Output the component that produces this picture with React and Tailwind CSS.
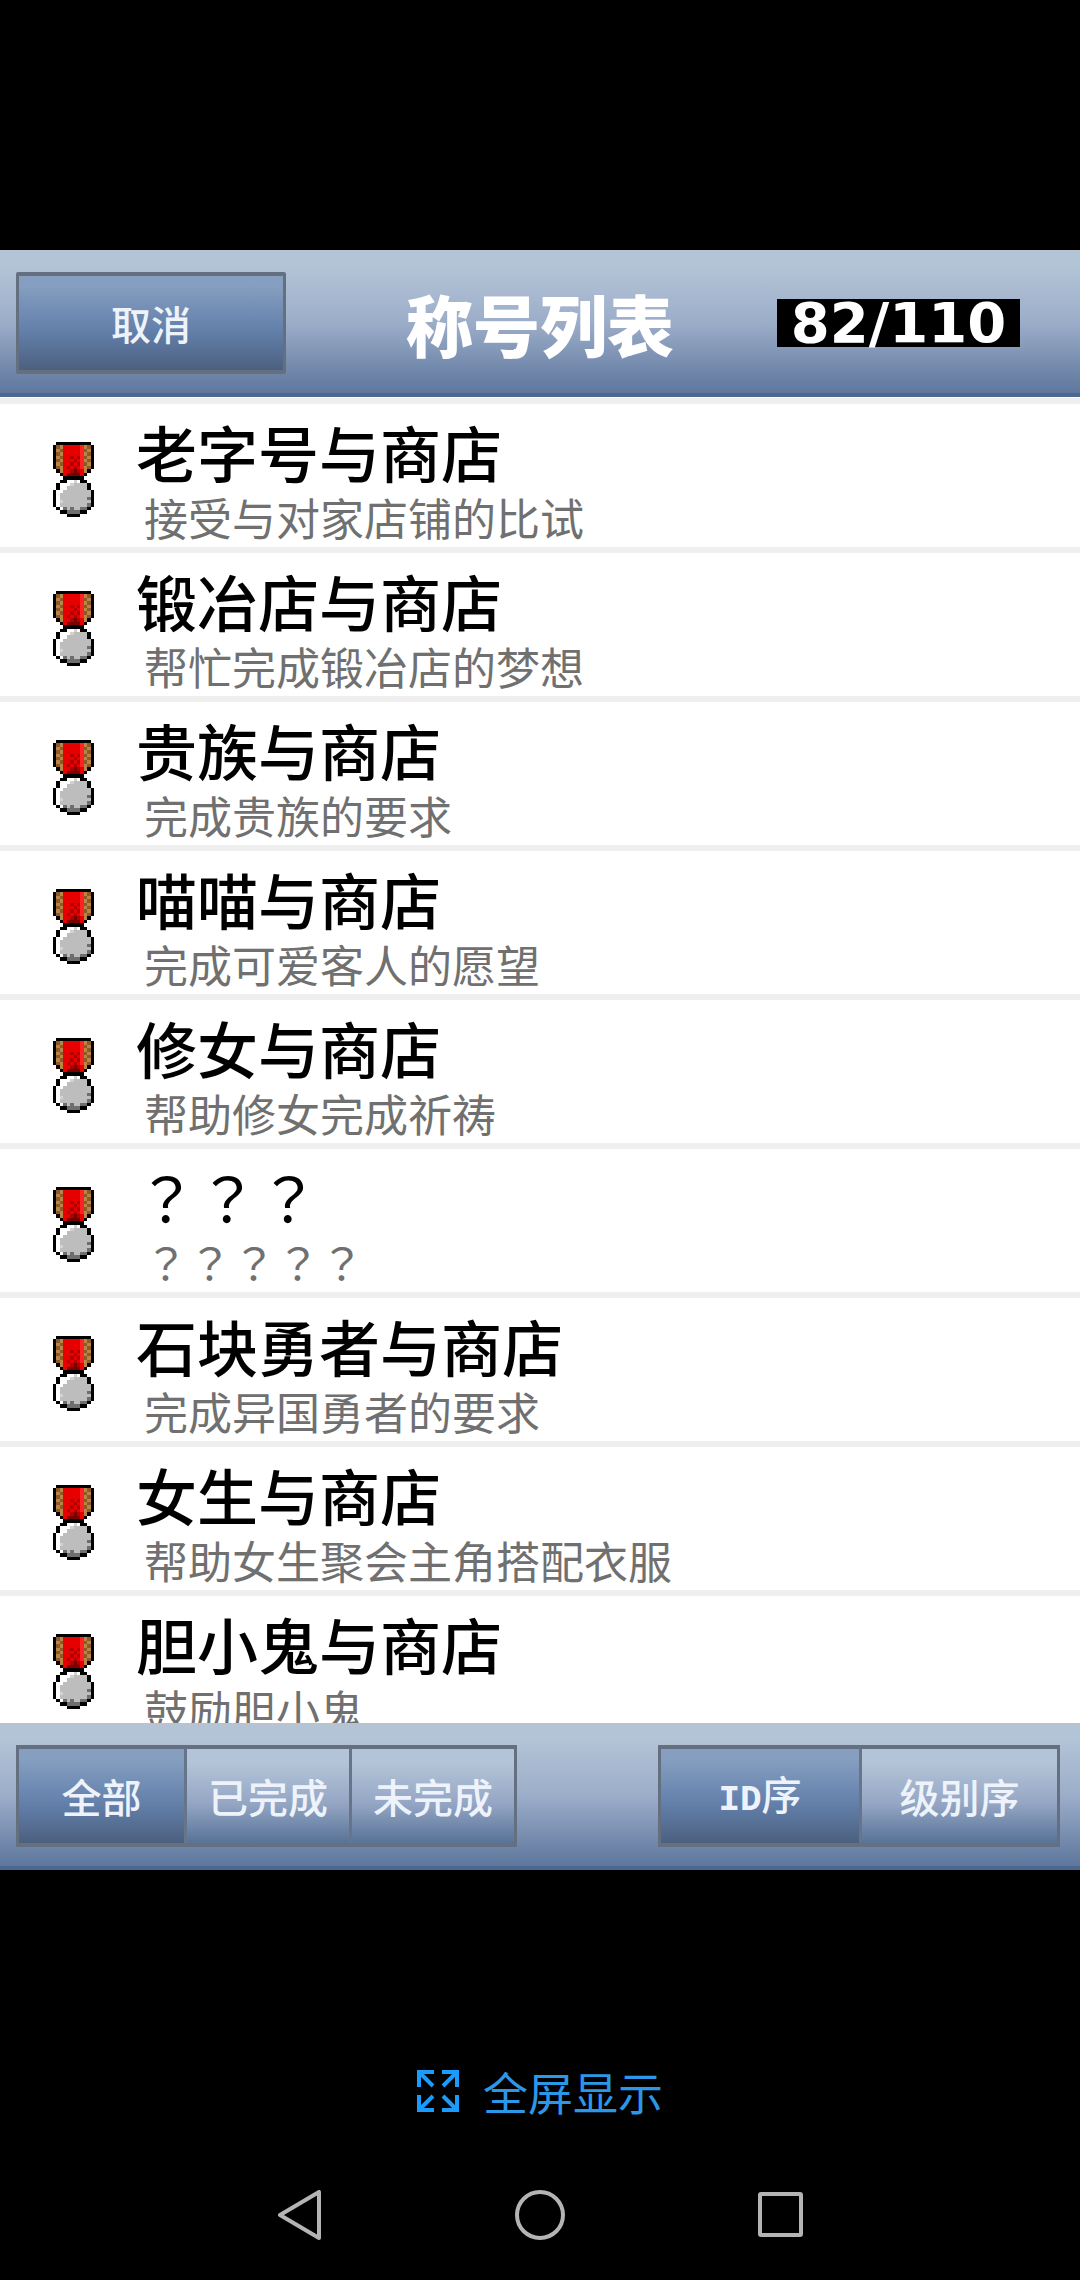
import React, { useState } from 'react';
import clsx from 'clsx';

const titles = [
    { name: '老字号与商店', desc: '接受与对家店铺的比试' },
    { name: '锻冶店与商店', desc: '帮忙完成锻冶店的梦想' },
    { name: '贵族与商店', desc: '完成贵族的要求' },
    { name: '喵喵与商店', desc: '完成可爱客人的愿望' },
    { name: '修女与商店', desc: '帮助修女完成祈祷' },
    { name: '？？？', desc: '？？？？？', hidden: true },
    { name: '石块勇者与商店', desc: '完成异国勇者的要求' },
    { name: '女生与商店', desc: '帮助女生聚会主角搭配衣服' },
    { name: '胆小鬼与商店', desc: '鼓励胆小鬼' },
];

// one character per pixel of the medal sprite
const medalRows = [
    ' KKKKKKKKKK ',
    'KBARRRRRSABK',
    'KABRRRRRSBAK',
    'KBARRRRRSABK',
    'KABRRDRDSBAK',
    'KBARRRDRSABK',
    'KABRRDRDSBAK',
    'KBARDRDRSABK',
    ' KARRDMDRAK ',
    '  KRMMMMRK  ',
    '   KKKKKK   ',
    '  KKWWLWKK  ',
    ' KWWWLGGGGK ',
    ' KWWGGGGGGK ',
    'KWWGGGGGGGGK',
    'KWGGGGGGGGGK',
    'KWGGGGGGGGTK',
    'KWLGGGGGGGGK',
    'KWGGGGGGGGTK',
    ' KWTGTGGTTK ',
    '  KKTTTTKK  ',
    '    KKKK    ',
];

const medalColors = {
    K: '#000000',
    A: '#b98545',
    B: '#8c5a2a',
    R: '#e60000',
    S: '#ff2222',
    D: '#b00000',
    M: '#7a0000',
    W: '#ffffff',
    L: '#d2d2d2',
    G: '#bdbdbd',
    T: '#6e6e6e',
};

const Medal = () => (
    <svg viewBox="0 0 12 22" preserveAspectRatio="none" shapeRendering="crispEdges" className="h-[75px] w-[41px] shrink-0" aria-hidden="true">
        {medalRows.map((row, y) =>
            row.split('').map((c, x) =>
                c === ' ' ? null : <rect key={`${x}-${y}`} x={x} y={y} width="1" height="1" fill={medalColors[c]} />
            )
        )}
    </svg>
);

const barStyle =
    'h-[147px] shrink-0 flex items-center justify-between px-4 border-t-2 border-t-[#b9c3d0] border-b-4 border-b-[#4b6890] bg-linear-to-b from-[#b3c4d7] from-10% via-[#9cadc9] via-50% to-[#5e779d]';

const activeStyle = 'bg-linear-to-b from-[#869fc0] from-10% via-[#6380ab] via-58% to-[#4c607f]';
const idleStyle = 'bg-linear-to-b from-[#b3c4d8] from-15% via-[#94a6c4] via-58% to-[#587397]';

const TabGroup = ({ tabs, value, onChange, tabWidth, className }) => (
    <div className={clsx('flex h-[102px] border-y-4 border-x-[3px] border-[#647080]', className)}>
        {tabs.map((tab, i) => (
            <button
                key={tab.id}
                onClick={() => onChange(tab.id)}
                className={clsx(
                    'text-center text-[40px] leading-none font-medium text-[#eef3fb]',
                    tabWidth,
                    i > 0 && 'border-l-[3px] border-[#66758a]',
                    value === tab.id ? activeStyle : idleStyle
                )}
            >
                {tab.label}
            </button>
        ))}
    </div>
);

const App = () => {
    const [filter, setFilter] = useState('all');
    const [order, setOrder] = useState('id');

    return (
        <div className="flex h-screen flex-col overflow-hidden bg-black pt-[250px] font-['Noto_Sans_CJK_SC',sans-serif]">
            {/* header */}
            <header className={clsx(barStyle, 'relative')}>
                <button className={clsx('h-[102px] w-[270px] rounded-xs border-x-[3px] border-y-4 border-[#647080] text-[40px] leading-none font-medium text-[#eef3fb]', activeStyle)}>
                    取消
                </button>
                <h1 className="absolute inset-x-0 text-center text-[67px] leading-none font-black text-white pointer-events-none">称号列表</h1>
                <div className="mr-11 flex h-12 w-[243px] items-center justify-center bg-black font-['DejaVu_Sans',sans-serif] text-[56px] leading-none font-bold text-white">
                    82/110
                </div>
            </header>

            {/* list */}
            <main className="min-h-0 flex-1 overflow-hidden bg-white pt-px">
                <ul>
                    {titles.map((item) => (
                        <li
                            key={item.name}
                            className={clsx(
                                'flex h-[149px] items-center border-t-[6px] border-[#efefef] pt-2 pl-[53px]',
                                item.hidden && "font-['Noto_Sans_CJK_JP',sans-serif]"
                            )}
                        >
                            <Medal />
                            <div className="ml-[42px]">
                                <h2 className={clsx('text-[61px] leading-[74px] text-black', !item.hidden && 'font-medium')}>{item.name}</h2>
                                <p className="pl-2 text-[44px] leading-[56px] text-[#707070]">{item.desc}</p>
                            </div>
                        </li>
                    ))}
                </ul>
            </main>

            {/* filter + order */}
            <footer className={barStyle}>
                <TabGroup
                    tabs={[
                        { id: 'all', label: '全部' },
                        { id: 'done', label: '已完成' },
                        { id: 'todo', label: '未完成' },
                    ]}
                    value={filter}
                    onChange={setFilter}
                    tabWidth="w-[165px]"
                />
                <TabGroup
                    tabs={[
                        { id: 'id', label: <><span className="font-['Liberation_Mono',monospace] text-[36px] font-bold">ID</span>序</> },
                        { id: 'level', label: '级别序' },
                    ]}
                    value={order}
                    onChange={setOrder}
                    tabWidth="w-[198px]"
                    className="mr-1"
                />
            </footer>

            {/* system area */}
            <div className="flex h-[410px] shrink-0 flex-col items-center justify-end pb-[35px]">
                <button className="flex h-[60px] items-center gap-6 text-[45px] leading-none text-[#2b97e6]">
                    <svg width="42" height="42" viewBox="0 0 42 42" fill="none" stroke="#1a9cff" strokeWidth="4" aria-hidden="true">
                        <path d="M2 17V2h15M2 2l14 14M25 2h15v15M40 2L26 16M2 25v15h15M2 40l14-14M40 25v15H25M40 40L26 26" />
                    </svg>
                    全屏显示
                </button>
                <nav className="mt-16 grid h-[60px] w-2/3 grid-cols-3 items-center justify-items-center">
                    <button aria-label="返回">
                        <svg width="50" height="50" viewBox="0 0 50 50" fill="none" stroke="#b4b4b4" strokeWidth="4" strokeLinejoin="round" aria-hidden="true">
                            <path d="M44 2v46L5 25z" />
                        </svg>
                    </button>
                    <button aria-label="主页">
                        <svg width="50" height="50" viewBox="0 0 50 50" fill="none" stroke="#b4b4b4" strokeWidth="4" aria-hidden="true">
                            <circle cx="25" cy="25" r="23" />
                        </svg>
                    </button>
                    <button aria-label="最近">
                        <svg width="50" height="50" viewBox="0 0 50 50" fill="none" stroke="#b4b4b4" strokeWidth="4" strokeLinejoin="round" aria-hidden="true">
                            <rect x="5" y="4" width="41" height="41" rx="1" />
                        </svg>
                    </button>
                </nav>
            </div>
        </div>
    );
};

export default App;
